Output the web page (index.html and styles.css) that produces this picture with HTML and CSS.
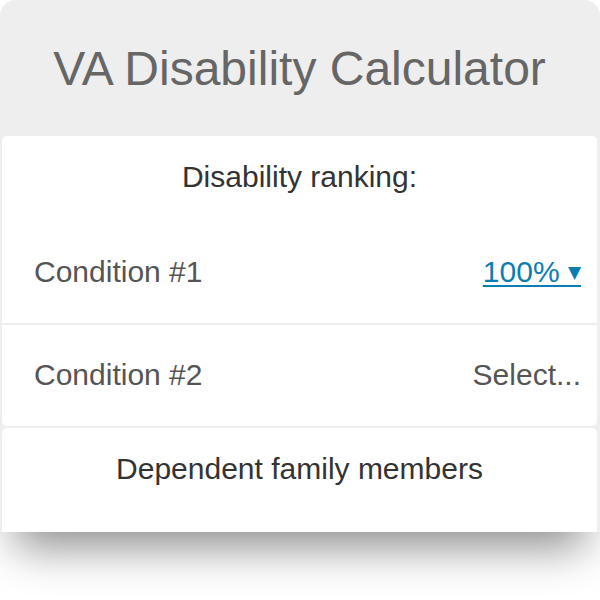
FILE: index.html
```html
<!DOCTYPE html>
<html lang="en">
<head>
  <meta charset="UTF-8">
  <title>VA Disability Calculator</title>
  <link rel="stylesheet" href="styles.css">
</head>
<body>
  <div class="page">
    <div class="calc">
      <h1 class="calc-title">VA Disability Calculator</h1>

      <section class="calc-block">
        <h2 class="block-title">Disability ranking:</h2>
        <div class="field-row">
          <span class="field-label">Condition #1</span>
          <a class="field-pick" href="#">100% <span class="caret"> ▼</span></a>
        </div>
        <div class="field-row">
          <span class="field-label">Condition #2</span>
          <span class="field-empty">Select...</span>
        </div>
      </section>

      <section class="calc-block">
        <h2 class="block-title">Dependent family members</h2>
      </section>
    </div>
  </div>
</body>
</html>
```

FILE: styles.css
```css
/* reset */
body, h1, h2 { margin: 0; padding: 0; }
body {
  background: #fff;
  font-family: "Liberation Sans", Arial, sans-serif;
  color: #333;
}

/* room under the card for its shadow */
.page { padding-bottom: 68px; }

/* card */
.calc {
  height: 532px;
  overflow: hidden;
  background: #eee;
  border-radius: 16px 16px 0 0;
  padding: 0 3px 0 2px;
  display: flex;
  flex-direction: column;
  gap: 2px;
  box-shadow: 0 30px 45px -15px rgba(0, 0, 0, .45);
}

.calc-title {
  font-size: 48px;
  line-height: 48px;
  font-weight: normal;
  color: #666;
  text-align: center;
  padding: 45px 0 41px;
}

/* white sections */
.calc-block {
  background: #fff;
  border-radius: 5px;
  flex-shrink: 0;
}
/* last section runs off the bottom of the card */
.calc-block:last-child {
  flex: 1;
  border-radius: 5px 5px 0 0;
}

.block-title {
  font-size: 30px;
  line-height: 30px;
  font-weight: normal;
  color: #333;
  text-align: center;
  padding: 26px 0 30px;
}

/* rows */
.field-row {
  display: flex;
  justify-content: space-between;
  align-items: center;
  padding: 35px 16px 36px 32px;
  font-size: 30px;
  line-height: 30px;
  color: #555;
}
.field-row + .field-row { border-top: 2px solid #eee; }

.field-pick {
  color: #0b7db5;
  text-decoration: underline;
  text-decoration-thickness: 2px;
  text-underline-offset: 3px;
}
.caret {
  font-family: "DejaVu Sans", sans-serif;
  font-size: 17px;
  vertical-align: 4px;
}
```
